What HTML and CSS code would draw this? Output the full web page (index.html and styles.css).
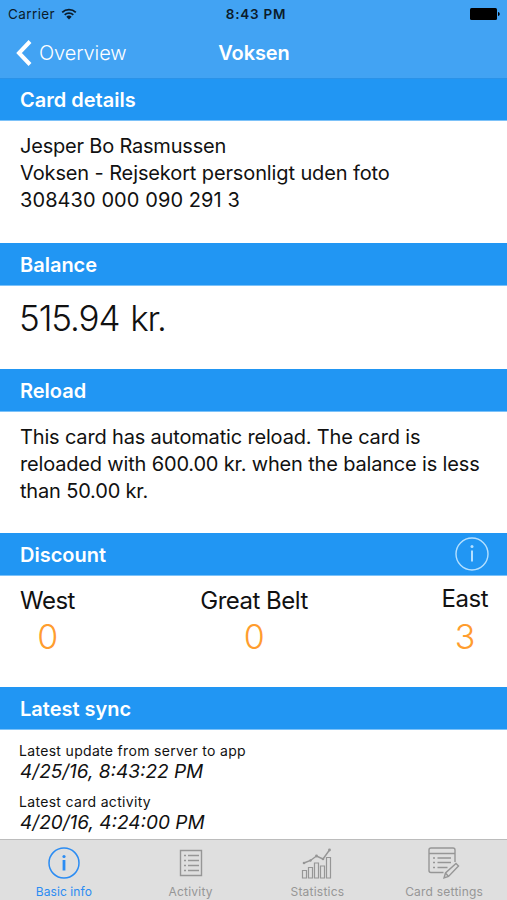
FILE: index.html
```
<!DOCTYPE html>
<html lang="en">
<head>
<meta charset="utf-8">
<title>Voksen</title>
<link rel="stylesheet" href="styles.css">
</head>
<body>
<div class="screen">
  <header class="top">
    <div class="status">
      <div class="carrier"><span>Carrier</span>
        <svg viewBox="0 0 16 12" width="16" height="12"><path d="M1.2 4.3a9.8 9.8 0 0 1 13.6 0M3.7 6.9a6.2 6.2 0 0 1 8.6 0" fill="none" stroke="#0b1c2b" stroke-width="1.8"/><path d="M8 11.5 5.3 8.8a3.9 3.9 0 0 1 5.4 0z" fill="#0b1c2b"/></svg>
      </div>
      <span class="clock">8:43 PM</span>
      <svg class="battery" viewBox="0 0 30 12" width="30" height="12"><rect width="27" height="12" rx="1.5" fill="#000"/><path d="M28 4c2.300.600 2.300 3.400 0 4z" fill="#000"/></svg>
    </div>
    <nav class="nav">
      <a class="back"><svg viewBox="0 0 16 26" width="16" height="26"><path d="M14 1.500 3 13l11 11.500" fill="none" stroke="#fff" stroke-width="4"/></svg><span>Overview</span></a>
      <h1 class="title">Voksen</h1>
    </nav>
  </header>
  <main class="content">
    <h2 class="head first">Card details</h2>
    <section class="body details"><p class="holder">Jesper Bo Rasmussen</p><p>Voksen - Rejsekort personligt uden foto</p><p class="number">308430 000 090 291 3</p></section>
    <h2 class="head">Balance</h2>
    <section class="body balance">515.94 kr.</section>
    <h2 class="head">Reload</h2>
    <section class="body reload"><p>This card has automatic reload. The card is<br>reloaded with 600.00 kr. when the balance is less<br>than 50.00 kr.</p></section>
    <h2 class="head">Discount
      <svg viewBox="0 0 34 34" width="34" height="34"><circle cx="17" cy="17" r="16" fill="none" stroke="#b5e0ff" stroke-width="1.400"/><path d="M17 13.500v11" stroke="#b5e0ff" stroke-width="2"/><circle cx="17" cy="9.500" r="1.500" fill="#b5e0ff"/></svg>
    </h2>
    <section class="body discount">
      <div class="zone"><span>West</span><b>0</b></div>
      <div class="zone"><span>Great Belt</span><b>0</b></div>
      <div class="zone east"><span>East</span><b>3</b></div>
    </section>
    <h2 class="head">Latest sync</h2>
    <section class="sync">
      <p class="label">Latest update from server to app</p><p class="time">4/25/16, 8:43:22 PM</p>
      <p class="label second">Latest card activity</p><p class="time">4/20/16, 4:24:00 PM</p>
    </section>
  </main>
  <footer class="tabs">
    <a class="tab active"><svg viewBox="0 0 34 34" width="34" height="34"><circle cx="17" cy="17" r="15" fill="none" stroke="currentColor" stroke-width="1.500"/><path d="M17 14v10.500" stroke="currentColor" stroke-width="2.800"/><circle cx="17" cy="10.500" r="1.600" fill="currentColor"/></svg><span>Basic info</span></a>
    <a class="tab"><svg viewBox="0 0 34 34" width="34" height="34" fill="none" stroke="currentColor" stroke-width="1.400"><path d="M6.500 4.500h21v25h-21z"/><path d="M14 9.500h11M14 14.500h11M14 19.500h11M14 24.500h11M10 9.500h2M10 14.500h2M10 19.500h2M10 24.500h2"/></svg><span>Activity</span></a>
    <a class="tab"><svg viewBox="0 0 34 34" width="34" height="34" fill="none" stroke="currentColor" stroke-width="1.200"><path d="M2.500 24.500h4v7.500h-4zM8.500 21.500h4V32h-4zM14.500 17h4v15h-4zM20.500 20h4v12h-4zM26.500 11.500h4V32h-4z"/><path d="m4 17 6.500-2.500L16.500 10l6.500 3 6.500-9" stroke-width="1.400"/><g fill="currentColor" stroke="none"><circle cx="4" cy="17" r="1.300"/><circle cx="10.500" cy="14.500" r="1.200"/><circle cx="16.500" cy="10" r="1.400"/><circle cx="23" cy="13" r="1.300"/><circle cx="29.500" cy="4" r="1.400"/></g></svg><span>Statistics</span></a>
    <a class="tab"><svg viewBox="0 0 34 34" width="34" height="34" fill="none" stroke="currentColor" stroke-width="1.400"><path d="M16.500 26.500H4a2 2 0 0 1-2-2V4a2 2 0 0 1 2-2h22a2 2 0 0 1 2 2v12M2 7.500h26"/><path d="M10.500 12h13.500M10.500 16.500h13.500M10.500 21.500h10M6 12h2M6 16.500h2M6 21.500h2"/><path d="m17 32 1.500-5 10.500-9.500 2.500 2.500-10 10.500zM18.500 27l3 3.500"/></svg><span>Card settings</span></a>
  </footer>
</div>
</body>
</html>
```
FILE: styles.css
```
* { box-sizing: border-box; margin: 0; padding: 0; }
body { background: #fff; font-family: Inter, "Liberation Sans", sans-serif; color: #111; }
.screen { width: 507px; height: 900px; display: flex; flex-direction: column; overflow: hidden; }
.top { height: 79px; flex: none; background: #42a3f3; border-bottom: 1px solid #2a92e8; }
.status { height: 27px; display: grid; grid-template-columns: 1fr auto 1fr; align-items: center; padding: 0 7px 0 8px; font-size: 13.5px; color: #0b1c2b; }
.carrier { display: flex; align-items: center; gap: 6px; letter-spacing: 0.4px; }
.clock { font-weight: 600; letter-spacing: 0.75px; margin-left: 4px; }
.battery { justify-self: end; }
.nav { height: 51px; display: grid; grid-template-columns: 1fr auto 1fr; align-items: center; padding: 0 15px 0 16px; color: #fff; }
.back { display: flex; align-items: center; gap: 7px; font-size: 20px; font-weight: 300; letter-spacing: -0.1px; }
.title { font-size: 20px; font-weight: 600; letter-spacing: -0.1px; }
.content { flex: 1; min-height: 0; overflow: hidden; }
.head { height: 43px; display: flex; align-items: center; justify-content: space-between; padding: 1px 18px 0 20px; background: #2196f3; color: #fff; font-size: 20px; font-weight: 600; border-bottom: 1px solid #7cc2f9; }
.head svg { margin-top: -1px; }
.first { height: 42px; padding-top: 0; }
.body { padding: 0 20px; font-size: 20px; line-height: 27px; white-space: nowrap; letter-spacing: -0.12px; }
.details { height: 122px; padding-top: 12px; }
.holder { letter-spacing: -0.2px; }
.number { letter-spacing: 0.08px; }
.balance { height: 83px; padding-top: 13px; padding-left: 19px; font-size: 35px; line-height: 38px; font-weight: 300; letter-spacing: -1.1px; word-spacing: 2px; }
.reload { height: 121px; padding-top: 12px; letter-spacing: -0.17px; }
.discount { height: 111px; display: grid; grid-template-columns: 1fr auto 1fr; padding: 10px 19px 0 20px; font-size: 24px; line-height: 30px; letter-spacing: -0.5px; }
.zone { display: flex; flex-direction: column; align-items: center; justify-self: start; }
.zone b { font-size: 34px; line-height: 42px; font-weight: 300; color: #ff9d2e; }
.east { justify-self: end; }
.east span { margin: -2px 0 2px; }
.sync { padding: 11px 19px; }
.label { font-size: 14px; line-height: 20px; letter-spacing: 0.32px; }
.time { font-size: 19px; line-height: 22px; font-style: italic; padding-left: 1px; }
.second { margin-top: 9px; }
.tabs { height: 61px; flex: none; display: grid; grid-template-columns: repeat(4, 1fr); background: #dfdfdf; border-top: 1px solid #bcbcbc; }
.tab { display: flex; flex-direction: column; align-items: center; padding: 6px 0 0 1px; gap: 4px; font-size: 12px; line-height: 16px; color: #969696; letter-spacing: 0.22px; }
.active { color: #2b8cf3; letter-spacing: 0.1px; }
```
